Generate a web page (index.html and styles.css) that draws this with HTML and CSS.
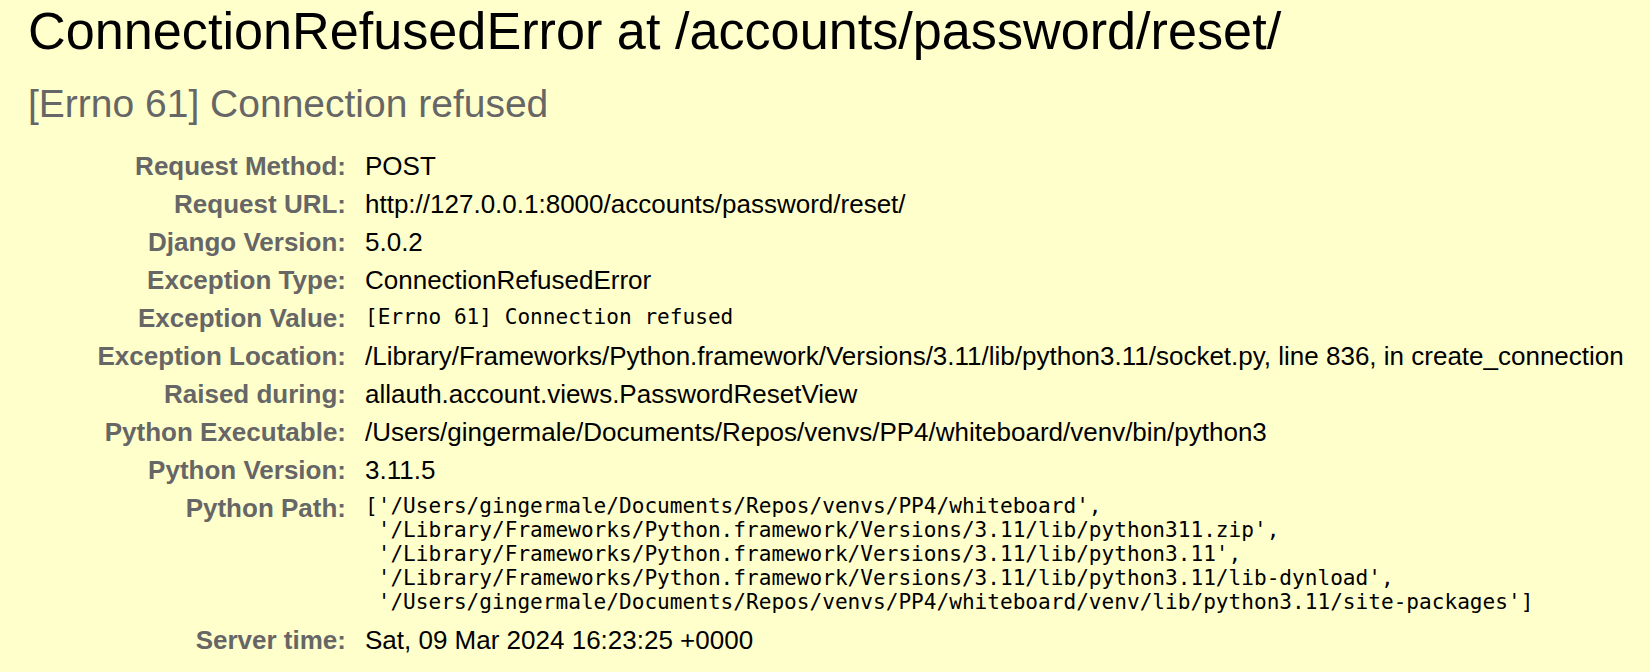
FILE: index.html
```html
<!DOCTYPE html>
<html lang="en">
<head>
<meta charset="utf-8">
<title>ConnectionRefusedError at /accounts/password/reset/</title>
<link rel="stylesheet" href="styles.css">
</head>
<body>
<div class="summary">
  <h1 class="title">ConnectionRefusedError at /accounts/password/reset/</h1>
  <h2 class="subtitle">[Errno 61] Connection refused</h2>
  <table class="meta">
    <tbody>
      <tr><th class="label">Request Method:</th><td class="value">POST</td></tr>
      <tr><th class="label">Request URL:</th><td class="value">http://127.0.0.1:8000/accounts/password/reset/</td></tr>
      <tr><th class="label">Django Version:</th><td class="value">5.0.2</td></tr>
      <tr><th class="label">Exception Type:</th><td class="value">ConnectionRefusedError</td></tr>
      <tr><th class="label">Exception Value:</th><td class="value"><pre class="mono mono-value">[Errno 61] Connection refused</pre></td></tr>
      <tr><th class="label">Exception Location:</th><td class="value">/Library/Frameworks/Python.framework/Versions/3.11/lib/python3.11/socket.py, line 836, in create_connection</td></tr>
      <tr><th class="label">Raised during:</th><td class="value">allauth.account.views.PasswordResetView</td></tr>
      <tr><th class="label">Python Executable:</th><td class="value">/Users/gingermale/Documents/Repos/venvs/PP4/whiteboard/venv/bin/python3</td></tr>
      <tr><th class="label">Python Version:</th><td class="value">3.11.5</td></tr>
      <tr><th class="label">Python Path:</th><td class="value"><pre class="mono mono-path">['/Users/gingermale/Documents/Repos/venvs/PP4/whiteboard',
 '/Library/Frameworks/Python.framework/Versions/3.11/lib/python311.zip',
 '/Library/Frameworks/Python.framework/Versions/3.11/lib/python3.11',
 '/Library/Frameworks/Python.framework/Versions/3.11/lib/python3.11/lib-dynload',
 '/Users/gingermale/Documents/Repos/venvs/PP4/whiteboard/venv/lib/python3.11/site-packages']</pre></td></tr>
      <tr><th class="label">Server time:</th><td class="value">Sat, 09 Mar 2024 16:23:25 +0000</td></tr>
    </tbody>
  </table>
</div>
</body>
</html>
```

FILE: styles.css
```css
html, body {
  margin: 0;
  padding: 0;
  background: #ffffcc;
}

body {
  font-family: "Liberation Sans", Arial, Helvetica, sans-serif;
  color: #000;
  min-height: 672px;
}

.summary {
  padding: 1px 0 0 28px;
  background: #ffffcc;
}

.title {
  margin: 0;
  font-size: 52.2px;
  line-height: 60px;
  font-weight: normal;
  color: #000;
}

.subtitle {
  margin: 20px 0 0 0;
  font-size: 39px;
  line-height: 45px;
  font-weight: normal;
  color: #666;
}

.meta {
  margin-top: 21px;
  border-collapse: collapse;
  border: none;
  font-size: 26px;
  line-height: 30px;
}

.meta .label {
  width: 312px;
  padding: 4px 13px 4px 6px;
  text-align: right;
  vertical-align: top;
  color: #666;
  font-weight: bold;
}

.meta .value {
  padding: 4px 6px;
  vertical-align: top;
  white-space: nowrap;
  color: #000;
}

.mono {
  margin: 0;
  font-family: "DejaVu Sans Mono", Menlo, monospace;
  font-size: 21.1px;
  line-height: 24px;
  white-space: pre;
  color: #000;
}

.mono-value {
  padding-top: 2px;
}

.mono-path {
  padding: 1px 0 3px 0;
}
```
